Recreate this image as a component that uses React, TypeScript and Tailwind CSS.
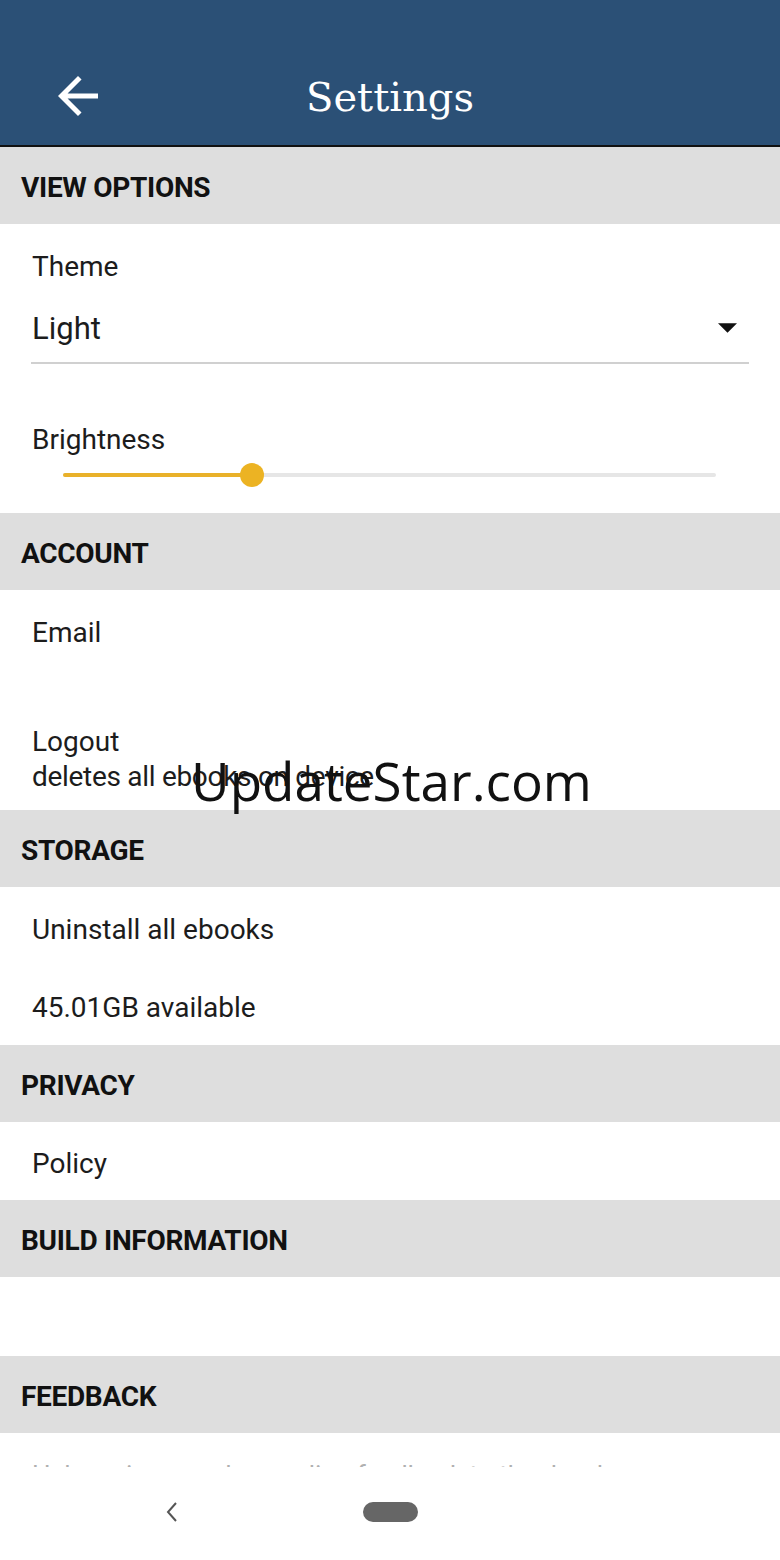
const sans = { fontFamily: "Roboto, 'Liberation Sans', sans-serif" };

function SectionHeader({ title }: { title: string }) {
  return (
    <div className="h-[77px] bg-[#dedede] flex items-center pl-[21px] pt-[4px]">
      <span className="text-[28px] font-bold text-[#111] tracking-[-0.3px]">{title}</span>
    </div>
  );
}

function Row({ children, className = "" }: { children: React.ReactNode; className?: string }) {
  return <div className={`pl-[32px] text-[28px] text-[#1c1c1c] ${className}`}>{children}</div>;
}

export default function App() {
  const brightness = 29; // percent

  return (
    <div className="relative w-[780px] h-[1560px] bg-white overflow-hidden" style={sans}>
      {/* app bar */}
      <header className="h-[147px] bg-[#2b5076] border-b-2 border-[#111] relative flex items-center justify-center">
        <svg
          viewBox="0 0 24 24"
          className="absolute left-[48px] top-[66px] w-[60px] h-[60px]"
          fill="white"
        >
          <path d="M20 11H7.83l5.59-5.59L12 4l-8 8 8 8 1.41-1.41L7.83 13H20v-2z" />
        </svg>
        <h1
          className="text-white text-[40px] mt-[48px] leading-none"
          style={{ fontFamily: "'DejaVu Serif', 'Liberation Serif', serif" }}
        >
          Settings
        </h1>
      </header>

      <SectionHeader title="VIEW OPTIONS" />
      <div className="h-[289px] flex flex-col">
        <Row className="pt-[27px] leading-[32px]">Theme</Row>
        <div className="mx-[31px] mt-[25px] h-[56px] border-b-2 border-[#d0d0d0] flex items-center justify-between">
          <span className="text-[31px] text-[#1c1c1c] pl-[1px] -mt-[12px]">Light</span>
          <svg viewBox="0 0 20 10" className="w-[19px] h-[10px] mr-[12px] -mt-[14px]">
            <polygon points="0,0 20,0 10,10" fill="#111" />
          </svg>
        </div>
        <Row className="mt-[60px] leading-[32px]">Brightness</Row>
        <div className="mx-[63px] mt-[17px] relative h-[4px] w-[653px] bg-[#e6e6e6] rounded-full">
          <div className="h-full bg-[#e9b12a] rounded-full" style={{ width: `${brightness}%` }} />
          <div
            className="absolute top-1/2 -translate-y-1/2 -translate-x-1/2 w-[24px] h-[24px] rounded-full bg-[#ecb323]"
            style={{ left: `${brightness}%` }}
          />
        </div>
      </div>

      <SectionHeader title="ACCOUNT" />
      <div className="h-[220px]">
        <Row className="pt-[27px] leading-[32px]">Email</Row>
        <Row className="mt-[77px] leading-[32px]">Logout</Row>
        <Row className="text-[21px] leading-[26px] mt-[6px] tracking-[-0.3px]">deletes all ebooks on device</Row>
      </div>

      <SectionHeader title="STORAGE" />
      <div className="h-[158px] flex flex-col">
        <Row className="h-[78px] flex items-center pt-[8px]">Uninstall all ebooks</Row>
        <Row className="h-[78px] flex items-center pt-[8px]">45.01GB available</Row>
      </div>

      <SectionHeader title="PRIVACY" />
      <Row className="h-[78px] flex items-center pt-[6px]">Policy</Row>

      <SectionHeader title="BUILD INFORMATION" />
      <div className="h-[79px]" />

      <SectionHeader title="FEEDBACK" />

      {/* feedback text, cut off under the nav bar */}
      <div className="h-[34px] overflow-hidden">
        <div className="pl-[32px] text-[26px] text-[#b0b0b0] leading-[32px] mt-[26px]">
          Help us improve by sending feedback to the developers
        </div>
      </div>

      {/* system nav bar */}
      <div className="h-[93px] bg-white flex items-center justify-center relative">
        <svg viewBox="0 0 12 20" className="absolute left-[166px] top-[35px] w-[12px] h-[20px]">
          <polyline points="10,1 2,10 10,19" fill="none" stroke="#555" strokeWidth="2" />
        </svg>
        <div className="w-[55px] h-[20px] rounded-full bg-[#666] -mt-[4px]" />
      </div>

      {/* watermark overlay */}
      <div
        className="absolute left-[191px] top-[754px] text-[53px] leading-none text-[#111]"
        style={{ fontFamily: "'Open Sans', 'Noto Sans', sans-serif" }}
      >
        UpdateStar.com
      </div>
    </div>
  );
}
